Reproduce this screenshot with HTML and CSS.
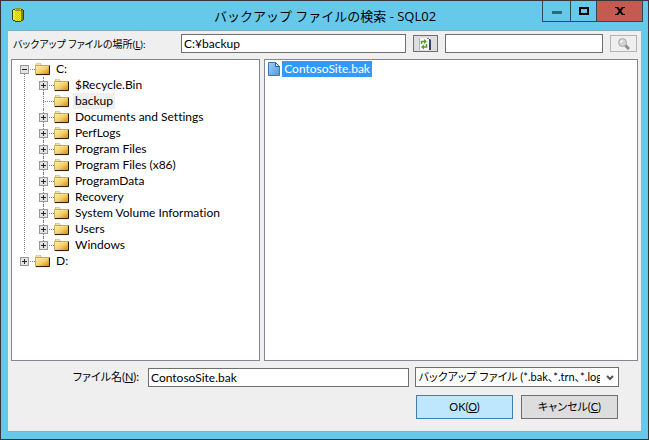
FILE: index.html
```html
<!DOCTYPE html>
<html lang="ja">
<head>
  <meta charset="UTF-8" />
  <meta name="viewport" content="width=device-width, initial-scale=1.0"/>
  <title>バックアップ ファイルの検索 - SQL02</title>
  <link rel="stylesheet" href="styles.css">
</head>
<body>

<!-- Shared icons -->
<svg class="sprite" aria-hidden="true">
  <defs>
    <linearGradient id="gold" x1="0" y1="0" x2="1" y2="1">
      <stop offset="0" stop-color="#fff2b4"/>
      <stop offset=".5" stop-color="#f6d06c"/>
      <stop offset="1" stop-color="#cc8400"/>
    </linearGradient>
    <linearGradient id="paper" x1="0" y1="0" x2="1" y2="1">
      <stop offset="0" stop-color="#a4d0f6"/>
      <stop offset="1" stop-color="#4e9ae0"/>
    </linearGradient>
    <pattern id="dots" width="2" height="2" patternUnits="userSpaceOnUse">
      <path d="M0 0h1v1H0zM1 1h1v1H1z" fill="#84c8d8"/>
    </pattern>
    <symbol id="folder" viewBox="0 0 16 13">
      <path d="M1 3V1l1-1h3l1 1v2z" fill="#f6e3a0" stroke="#c8a860" stroke-width=".6"/>
      <path d="M.5 2.5h13.7v9.200H.5z" fill="url(#gold)" stroke="#b89850" stroke-width=".8"/>
      <path d="M14.500 2.500v9H1" fill="none" stroke="#2c2008"/>
    </symbol>
  </defs>
</svg>

<div class="window">
  <header class="titlebar">
    <svg class="app-icon" width="12" height="16" viewBox="0 0 12 16" shape-rendering="crispEdges">
      <path d="M1 2h2V1h6v1h2v12H9v1H3v-1H1z" fill="#f4ec20"/>
      <path d="M3 3h6v11H3z" fill="url(#dots)"/>
      <path d="M3 1h6v1H3zM3 3h6v1H3z" fill="#8c8c30"/>
      <path d="M4 2h4v1H4z" fill="#48b8d8"/>
      <path d="M9 3h2v11H9z" fill="#8c8410"/>
      <path d="M0 3h1v10H0zM11 3h1v10h-1zM1 2h2v1H1zM9 2h2v1H9zM1 13h2v1H1zM9 13h2v1H9zM3 14h6v1H3z" fill="#40420c"/>
    </svg>
    <h1>バックアップ ファイルの検索 - SQL02</h1>
    <div class="window-buttons">
      <button class="minimize" aria-label="最小化"><svg width="10" height="10"><path d="M0 5h10v3H0z" fill="#33677a"/></svg></button>
      <button class="maximize" aria-label="最大化"><svg width="10" height="8"><path d="M1 1h8v6H1z" fill="none" stroke="#000" stroke-width="2"/></svg></button>
      <button class="close" aria-label="閉じる"><svg width="10" height="8"><path d="M2 0l6 8M8 0L2 8" stroke="#000" stroke-width="2"/><path d="M0 .5h3M7 .5h3M0 7.500h3M7 7.500h3" stroke="#000"/></svg></button>
    </div>
  </header>

  <main class="client">
    <div class="location">
      <label for="path">バックアップ ファイルの場所(<u>L</u>):</label>
      <input id="path" type="text" value="C:¥backup">
      <button class="tool" aria-label="最新の情報に更新">
        <svg width="12" height="12" viewBox="0 0 12 12">
          <path d="M0 0h11v12H0z" fill="#f8f8fc"/>
          <path d="M0 0h1v12H0z" fill="#a8b4c8"/>
          <path d="M10 1h1l1 1v10h-2z" fill="#38446c"/>
          <path d="M8 0h2v1H8z" fill="#c060a0"/>
          <path d="M2.500 6V3.500H6M7.500 6v3H4" fill="none" stroke="#5c9c28" stroke-width="1.500"/>
          <path d="M5 1l3 2.500L5 6zM5 6.500L2 9l3 2.500z" fill="#5c9c28"/>
        </svg>
      </button>
      <input class="search" type="text" aria-label="検索">
      <button class="tool" aria-label="検索" disabled>
        <svg width="12" height="12" viewBox="0 0 12 12">
          <path d="M7 7l4 4" stroke="#8c8c8c" stroke-width="3"/>
          <circle cx="4.500" cy="4.500" r="4" fill="#d4d4d4" stroke="#a8a8a8"/>
          <path d="M2.500 4.500l2-2" stroke="#fff" stroke-width="1.500"/>
        </svg>
      </button>
    </div>

    <div class="panes">
      <div class="pane">
        <ul class="tree">
          <li class="open">
            <div class="node"><button class="toggle" aria-label="折りたたむ"></button><svg class="folder"><use href="#folder"/></svg><span>C:</span></div>
            <ul>
              <li><div class="node"><button class="toggle plus" aria-label="展開"></button><svg class="folder"><use href="#folder"/></svg><span>$Recycle.Bin</span></div></li>
              <li><div class="node leaf"><svg class="folder"><use href="#folder"/></svg><span class="current">backup</span></div></li>
              <li><div class="node"><button class="toggle plus" aria-label="展開"></button><svg class="folder"><use href="#folder"/></svg><span>Documents and Settings</span></div></li>
              <li><div class="node"><button class="toggle plus" aria-label="展開"></button><svg class="folder"><use href="#folder"/></svg><span>PerfLogs</span></div></li>
              <li><div class="node"><button class="toggle plus" aria-label="展開"></button><svg class="folder"><use href="#folder"/></svg><span>Program Files</span></div></li>
              <li><div class="node"><button class="toggle plus" aria-label="展開"></button><svg class="folder"><use href="#folder"/></svg><span>Program Files (x86)</span></div></li>
              <li><div class="node"><button class="toggle plus" aria-label="展開"></button><svg class="folder"><use href="#folder"/></svg><span>ProgramData</span></div></li>
              <li><div class="node"><button class="toggle plus" aria-label="展開"></button><svg class="folder"><use href="#folder"/></svg><span>Recovery</span></div></li>
              <li><div class="node"><button class="toggle plus" aria-label="展開"></button><svg class="folder"><use href="#folder"/></svg><span>System Volume Information</span></div></li>
              <li><div class="node"><button class="toggle plus" aria-label="展開"></button><svg class="folder"><use href="#folder"/></svg><span>Users</span></div></li>
              <li><div class="node"><button class="toggle plus" aria-label="展開"></button><svg class="folder"><use href="#folder"/></svg><span>Windows</span></div></li>
            </ul>
          </li>
          <li><div class="node"><button class="toggle plus" aria-label="展開"></button><svg class="folder"><use href="#folder"/></svg><span>D:</span></div></li>
        </ul>
      </div>
      <div class="pane">
        <ul class="files">
          <li>
            <svg width="12" height="14" viewBox="0 0 12 14">
              <path d="M.5.5h7l4 4v9H.5z" fill="url(#paper)" stroke="#3c78b8"/>
              <path d="M7.500.5v4h4z" fill="#e4f2fc" stroke="#2860a8"/>
            </svg>
            <span>ContosoSite.bak</span>
          </li>
        </ul>
      </div>
    </div>

    <div class="filename">
      <label for="name">ファイル名(<u>N</u>):</label>
      <input id="name" type="text" value="ContosoSite.bak">
      <div class="dropdown">
        <select aria-label="ファイルの種類">
          <option>バックアップ ファイル (*.bak、*.trn、*.log)</option>
        </select>
        <svg width="8" height="6"><path d="M1 1l3 3 3-3" fill="none" stroke="#555" stroke-width="2"/></svg>
      </div>
    </div>

    <div class="actions">
      <button class="ok">OK(<u>O</u>)</button>
      <button class="cancel">キャンセル(<u>C</u>)</button>
    </div>
  </main>
</div>

</body>
</html>
```
FILE: styles.css
```css
:root {
  --frame: #66c9ea;
  --edge: #35363b;
  --face: #efefef;
  --line: #828790;
  --field: #6f6f6f;
}

* {
  box-sizing: border-box;
}
body {
  margin: 0;
  font: 12px/16px Lato, "Noto Sans CJK JP", sans-serif;
  font-feature-settings: "palt";
  font-variant-ligatures: none;
  color: #000;
}
ul {
  list-style: none;
  margin: 0;
  padding: 0;
}
button, input, select {
  font: inherit;
  font-feature-settings: inherit;
  font-variant-ligatures: inherit;
  color: inherit;
  border-radius: 0;
  margin: 0;
  padding: 0;
}
.sprite {
  position: absolute;
  width: 0;
  height: 0;
}

.window {
  display: flex;
  flex-direction: column;
  min-height: 100vh;
  padding: 0 7px 7px;
  border: 1px solid var(--edge);
  background: var(--frame);
}

/* Title bar */
.titlebar {
  display: flex;
  align-items: flex-start;
  height: 29px;
}
.app-icon {
  margin: 6px 0 0 4px;
}
.titlebar h1 {
  flex: 1;
  margin: 4px 0 0 84px;
  font: 13px/22px "Open Sans", "Noto Sans CJK JP", sans-serif;
  text-align: center;
}
.window-buttons {
  display: flex;
  border: 1px solid #2c4a58;
  border-top: 0;
  margin-right: -2px;
}
.window-buttons button {
  display: flex;
  align-items: center;
  justify-content: center;
  width: 25px;
  height: 20px;
  border: 0;
  background: none;
}
.window-buttons .minimize {
  width: 28px;
  border-right: 1px solid #2c4a58;
}
.window-buttons .close {
  width: 46px;
  border-left: 1px solid #2c4a58;
  background: #c35b51;
}

/* Dialog body */
.client {
  flex: 1;
  display: flex;
  flex-direction: column;
  padding: 3px 3px 12px;
  border-top: 1px solid #85a9b8;
  border-bottom: 1px solid #75b5cc;
  background: var(--face);
}
input {
  min-width: 0;
  height: 19px;
  padding: 0 2px;
  border: 1px solid var(--field);
  background: #fff;
}
.location {
  display: flex;
  align-items: center;
}
.location label {
  width: 170px;
  padding-left: 2px;
  font-size: 10px;
}
.location #path {
  flex: 226;
}
.location .search {
  flex: 157;
}
.tool {
  display: flex;
  align-items: center;
  justify-content: center;
  width: 25px;
  height: 17px;
  margin: 0 7px;
  border: 1px solid var(--field);
  background: #ddd;
}
.tool:disabled {
  width: 27px;
  margin-right: 1px;
  border-color: #b4b4b4;
  background: var(--face);
}

.panes {
  flex: 1;
  display: grid;
  grid-template-columns: 2fr 3fr;
  gap: 4px;
  margin: 6px 0;
}
.pane {
  border: 1px solid var(--line);
  background: #fff;
}

/* Folder tree */
.tree {
  padding: 1px 8px;
}
.tree ul {
  padding-left: 19px;
}
.tree li {
  position: relative;
}
.tree li:not(:last-child)::before, .tree li ul li::before {
  content: "";
  position: absolute;
  left: 4px;
  top: 0;
  bottom: 0;
  border-left: 1px dotted #808080;
}
.tree > li:first-child::before {
  top: 8px;
}
.tree li ul li:last-child::before {
  bottom: 8px;
}
.node {
  position: relative;
  display: flex;
  align-items: center;
  height: 16px;
}
.node::before {
  content: "";
  position: absolute;
  left: 4px;
  top: 8px;
  width: 11px;
  border-top: 1px dotted #808080;
}
.toggle {
  position: relative;
  width: 9px;
  height: 9px;
  border: 1px solid #989898;
  background: #e4e4e4;
}
.toggle::before, .toggle.plus::after {
  content: "";
  position: absolute;
  left: 1px;
  top: 3px;
  width: 5px;
  height: 1px;
  background: #222;
}
.toggle.plus::after {
  left: 3px;
  top: 1px;
  width: 1px;
  height: 5px;
}
.folder {
  width: 16px;
  height: 13px;
  margin: 0 3px 0 6px;
}
.leaf .folder {
  margin-left: 15px;
}
.node span {
  padding: 0 2px;
}
.node .current {
  background: var(--face);
}

.files {
  padding: 1px 3px;
}
.files li {
  display: flex;
  align-items: center;
  gap: 2px;
}
.files span {
  padding: 0 2px;
  background: #3399ff;
  color: #fff;
}

/* File name and buttons */
.filename {
  display: flex;
  align-items: center;
  padding-right: 19px;
}
.filename label {
  width: 137px;
  padding-right: 9px;
  font-size: 11px;
  text-align: right;
}
.filename input {
  flex: 258;
}
.dropdown {
  position: relative;
  flex: 207;
  margin-left: 6px;
}
.dropdown select {
  appearance: none;
  display: block;
  width: 100%;
  height: 20px;
  padding: 0 18px 0 3px;
  border: 1px solid var(--field);
  background: #fff;
  font-size: 11px;
}
.dropdown svg {
  position: absolute;
  right: 5px;
  top: 8px;
  pointer-events: none;
}
.actions {
  display: flex;
  justify-content: flex-end;
  gap: 8px;
  padding: 8px 20px 0 0;
}
.actions button {
  width: 97px;
  height: 24px;
  border: 1px solid #707070;
  background: #ddd;
  font-size: 11px;
}
.actions .ok {
  border-color: #3c7fb1;
  background: #bee6fd;
}
```
